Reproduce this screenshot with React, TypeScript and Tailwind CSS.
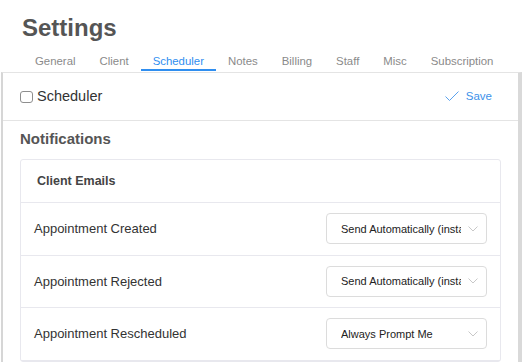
import React from 'react'

const tabs = ['General', 'Client', 'Scheduler', 'Notes', 'Billing', 'Staff', 'Misc', 'Subscription']

const rows = [
  { label: 'Appointment Created', value: 'Send Automatically (instantly)' },
  { label: 'Appointment Rejected', value: 'Send Automatically (instantly)' },
  { label: 'Appointment Rescheduled', value: 'Always Prompt Me' },
]

function Chevron() {
  return (
    <svg width="10" height="6" viewBox="0 0 10 6" fill="none" className="shrink-0">
      <path d="M0.5 0.5 L5 5 L9.5 0.5" stroke="#c8c8c8" strokeWidth="1" />
    </svg>
  )
}

export default function App() {
  return (
    <div className="w-[528px] h-[362px] overflow-hidden bg-white font-['Liberation_Sans',Arial,sans-serif]">
      <div className="pt-[14px] pl-[22px]">
        <h1 className="text-[24px] leading-[28px] font-bold text-[#555]">Settings</h1>
      </div>

      <div className="flex pl-[23px] mt-[13px]">
        {tabs.map((t) => (
          <div
            key={t}
            className={`px-3 pb-[1px] border-b-2 text-[11.4px] leading-[13px] ${
              t === 'Scheduler' ? 'border-[#2f8ef0] text-[#2f8ef0]' : 'border-transparent text-[#8a8a8a]'
            }`}
          >
            {t}
          </div>
        ))}
      </div>

      <div className="mt-[1px] ml-[1px] w-[521px] h-[300px] border-l-2 border-l-[#d6d6d6] border-t border-t-[#e4e4e4] border-r-4 border-r-[#d9d9d9]">
        <div className="h-[48px] flex items-center justify-between pl-[17px] pr-[26px] border-b border-[#e4e4e4]">
          <label className="flex items-center gap-[4px]">
            <span className="w-[13px] h-[12px] border border-[#8e8e8e] rounded-[3px] bg-white" />
            <span className="text-[14.5px] text-[#333]">Scheduler</span>
          </label>
          <button className="flex items-center gap-[7px] text-[11.5px] text-[#3d92ea]">
            <svg width="14" height="11" viewBox="0 0 14 11" fill="none">
              <path d="M0.5 5.5 L4.5 9.5 L13.5 0.5" stroke="#5aa2ee" strokeWidth="1" />
            </svg>
            Save
          </button>
        </div>

        <div className="px-[17px]">
          <h2 className="pt-[9px] text-[15px] leading-[18px] font-bold text-[#555]">Notifications</h2>
          <div className="mt-[11px] border border-[#e8e8ee] rounded-[3px]">
            <div className="h-[43px] flex items-center pl-[16px] border-b border-[#e8e8ee]">
              <span className="text-[12.5px] font-bold text-[#444]">Client Emails</span>
            </div>
            {rows.map((r) => (
              <div
                key={r.label}
                className="h-[52.5px] flex items-center justify-between pl-[13px] pr-[13px] border-b border-[#e8e8ee]"
              >
                <span className="text-[13px] text-[#333]">{r.label}</span>
                <div className="w-[161px] h-[31px] flex items-center pl-[14px] pr-[8px] border border-[#dcdcdc] rounded-[4px]">
                  <span className="flex-1 overflow-hidden whitespace-nowrap text-[11px] text-[#222] mr-[7px]">
                    {r.value}
                  </span>
                  <Chevron />
                </div>
              </div>
            ))}
          </div>
        </div>
      </div>
    </div>
  )
}
